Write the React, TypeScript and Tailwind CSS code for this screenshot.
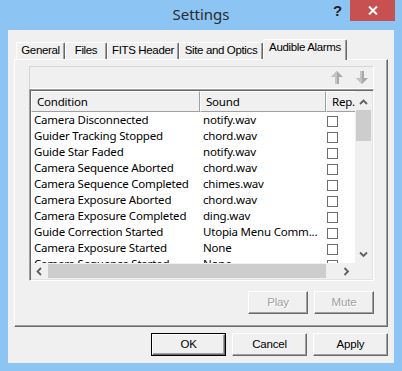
import React from "react";

const rows: [string, string][] = [
  ["Camera Disconnected", "notify.wav"],
  ["Guider Tracking Stopped", "chord.wav"],
  ["Guide Star Faded", "notify.wav"],
  ["Camera Sequence Aborted", "chord.wav"],
  ["Camera Sequence Completed", "chimes.wav"],
  ["Camera Exposure Aborted", "chord.wav"],
  ["Camera Exposure Completed", "ding.wav"],
  ["Guide Correction Started", "Utopia Menu Comm..."],
  ["Camera Exposure Started", "None"],
  ["Camera Sequence Started", "None"],
];

function Chevron({ dir }: { dir: "up" | "down" | "left" | "right" }) {
  const pts: Record<string, string> = {
    up: "1,6 4.5,2.5 8,6",
    down: "1,2.5 4.5,6 8,2.5",
    left: "6,1 2.5,4.5 6,8",
    right: "2.5,1 6,4.5 2.5,8",
  };
  return (
    <svg width="9" height="9" viewBox="0 0 9 9">
      <polyline points={pts[dir]} fill="none" stroke="#5f5f5f" strokeWidth="1.8" />
    </svg>
  );
}

function Tab({ label, cls, active }: { label: string; cls: string; active?: boolean }) {
  return (
    <div
      className={
        "flex justify-center border-l border-t border-r border-l-white border-t-white border-r-[#696969] bg-[#f0f0f0] rounded-tl-[2px] rounded-tr-[2px] shadow-[inset_-1px_0_0_#a0a0a0] " +
        cls +
        (active ? " h-[21px] -mb-[1px] relative z-10 pt-[1px]" : " h-[17px] pt-[1px]")
      }
    >
      <span className="text-[11.5px] leading-[13px] tracking-[-0.35px] text-black">{label}</span>
    </div>
  );
}

function Btn({ label, cls, def, disabled }: { label: string; cls: string; def?: boolean; disabled?: boolean }) {
  return (
    <div className={(def ? "border border-[#000] " : "") + cls}>
      <div
        className={
          "w-full h-full flex items-center justify-center border border-t-white border-l-white border-r-[#696969] border-b-[#696969] bg-[#f0f0f0] shadow-[inset_-1px_-1px_0_#a0a0a0] text-[11.5px] tracking-[-0.2px] " +
          (disabled ? "text-[#a0a0a0] [text-shadow:1px_1px_0_#ffffff]" : "text-black")
        }
      >
        {label}
      </div>
    </div>
  );
}

function ToolArrow({ up }: { up?: boolean }) {
  return (
    <svg width="12" height="13" viewBox="0 0 12 13">
      {up ? (
        <>
          <polygon points="6,0 12,6 8,6 8,13 4,13 4,6 0,6" fill="#a8a8a8" />
          <polygon points="6,0 6,13 4,13 4,6 0,6" fill="#c4c4c4" />
        </>
      ) : (
        <>
          <polygon points="4,0 8,0 8,7 12,7 6,13 0,7 4,7" fill="#a8a8a8" />
          <polygon points="4,0 6,0 6,13 0,7 4,7" fill="#c4c4c4" />
        </>
      )}
    </svg>
  );
}

export default function App() {
  return (
    <div className="w-[402px] h-[371px] bg-[#8cc4f4] flex flex-col font-['Liberation_Sans',Arial,sans-serif] overflow-hidden">
      {/* Title bar */}
      <div className="h-[30px] flex shrink-0">
        <div className="w-[72px]" />
        <div className="flex-1 flex justify-center pt-[4px]">
          <span className="font-['Noto_Sans',sans-serif] text-[15px] leading-[20px] text-[#2b2b2b]">Settings</span>
        </div>
        <div className="w-[72px] flex items-start">
          <div className="w-[20px] pl-[3px] pt-[2px] text-[15px] leading-[18px] font-bold text-[#222]">?</div>
          <div className="w-[45px] h-[21px] bg-[#c75050] flex items-center justify-center">
            <svg width="10" height="9" viewBox="0 0 10 9">
              <path d="M1 0.5 L9 8.5 M9 0.5 L1 8.5" stroke="#ffffff" strokeWidth="2" />
            </svg>
          </div>
        </div>
      </div>

      {/* Client */}
      <div className="mx-[8px] h-[333px] bg-[#f0f0f0] flex flex-col pt-[9px]">
        {/* Tabs */}
        <div className="flex items-end h-[20px] pl-[8px]">
          <Tab label="General" cls="w-[49px]" />
          <Tab label="Files" cls="w-[42px]" />
          <Tab label="FITS Header" cls="w-[72px]" />
          <Tab label="Site and Optics" cls="w-[84px]" />
          <Tab label="Audible Alarms" cls="w-[84px]" active />
        </div>

        {/* Panel */}
        <div className="ml-[6px] w-[374px] h-[268px] border border-t-white border-l-white border-r-[#696969] border-b-[#696969] shadow-[inset_-1px_-1px_0_#a0a0a0] pt-[6px] pl-[14px] flex flex-col">
          {/* Toolbar */}
          <div className="w-[345px] h-[23px] border border-t-[#d6d6d6] border-l-[#d6d6d6] border-r-white border-b-white flex items-center justify-end gap-[13px] pr-[5px]">
            <ToolArrow up />
            <ToolArrow />
          </div>

          {/* List */}
          <div className="w-[345px] h-[192px] border border-t-[#a0a0a0] border-l-[#a0a0a0] border-r-white border-b-white shadow-[inset_1px_1px_0_#696969,inset_-1px_-1px_0_#e3e3e3] p-[1px]">
            <div className="grid grid-cols-[324px_17px] grid-rows-[172px_16px] bg-white">
              {/* Content */}
              <div className="overflow-hidden flex flex-col font-['Noto_Sans',sans-serif] text-[11.5px] tracking-[-0.2px] text-black">
                <div className="flex h-[21px] shrink-0">
                  <div className="w-[169px] shrink-0 h-full border-l border-t border-l-white border-t-white border-r border-b border-r-[#a0a0a0] border-b-[#a0a0a0] bg-[#f0f0f0] pl-[5px] pt-[1px] leading-[18px]">
                    Condition
                  </div>
                  <div className="w-[126px] shrink-0 h-full border-l border-t border-l-white border-t-white border-r border-b border-r-[#a0a0a0] border-b-[#a0a0a0] bg-[#f0f0f0] pl-[5px] pt-[1px] leading-[18px]">
                    Sound
                  </div>
                  <div className="w-[40px] shrink-0 h-full border-l border-t border-l-white border-t-white border-r border-b border-r-[#a0a0a0] border-b-[#a0a0a0] bg-[#f0f0f0] pl-[5px] pt-[1px] leading-[18px] whitespace-nowrap">
                    Rep.
                  </div>
                </div>
                {rows.map(([c, s]) => (
                  <div key={c} className="flex h-[16px] shrink-0 leading-[16px]">
                    <div className="w-[169px] shrink-0 pl-[3px] whitespace-nowrap overflow-hidden">{c}</div>
                    <div className="w-[126px] shrink-0 pl-[3px] whitespace-nowrap overflow-hidden">{s}</div>
                    <div className="w-[29px] shrink-0 pl-[1px] pt-[4px]">
                      <div className="w-[11px] h-[11px] border border-[#6d6d6d] bg-white" />
                    </div>
                  </div>
                ))}
              </div>

              {/* Vertical scrollbar */}
              <div className="bg-[#f0f0f0] flex flex-col">
                <div className="h-[19px] flex items-center justify-center pt-[3px]">
                  <Chevron dir="up" />
                </div>
                <div className="flex-1 px-[1px]">
                  <div className="h-[31px] bg-[#cdcdcd]" />
                </div>
                <div className="h-[17px] flex items-center justify-center">
                  <Chevron dir="down" />
                </div>
              </div>

              {/* Horizontal scrollbar */}
              <div className="bg-[#f0f0f0] flex items-stretch">
                <div className="w-[17px] flex items-center justify-center">
                  <Chevron dir="left" />
                </div>
                <div className="flex-1 py-[1px]">
                  <div className="w-[278px] h-full bg-[#cdcdcd]" />
                </div>
                <div className="w-[17px] flex items-center justify-center">
                  <Chevron dir="right" />
                </div>
              </div>
              <div className="bg-[#f0f0f0]" />
            </div>
          </div>

          {/* Play / Mute */}
          <div className="w-[345px] mt-[10px] flex justify-end gap-[6px]">
            <Btn label="Play" cls="w-[60px] h-[23px]" disabled />
            <Btn label="Mute" cls="w-[60px] h-[23px]" disabled />
          </div>
        </div>

        {/* Dialog buttons */}
        <div className="mt-[6px] flex justify-end gap-[6px] pr-[6px]">
          <Btn label="OK" cls="w-[75px] h-[23px]" def />
          <Btn label="Cancel" cls="w-[75px] h-[23px]" />
          <Btn label="Apply" cls="w-[75px] h-[23px]" />
        </div>
      </div>
    </div>
  );
}
